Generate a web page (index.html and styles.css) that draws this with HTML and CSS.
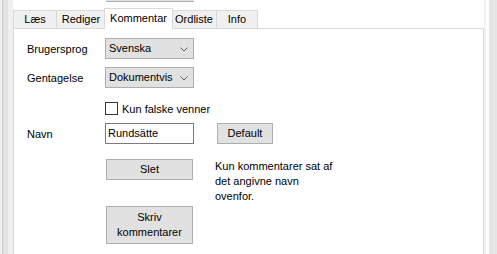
FILE: index.html
```html
<!DOCTYPE html>
<html lang="da">
<head>
  <meta charset="UTF-8">
  <title>Kommentar</title>
  <link rel="stylesheet" href="styles.css">
</head>
<body>
<div class="window">
  <div class="gutter"></div>
  <div class="main">
    <div class="topbar"><div class="cutoff"></div></div>
    <div class="tabs">
      <div class="tab tab-laes">Læs</div>
      <div class="tab tab-rediger">Rediger</div>
      <div class="tab tab-active">Kommentar</div>
      <div class="tab tab-ordliste">Ordliste</div>
      <div class="tab tab-info">Info</div>
    </div>
    <div class="panel">
      <div class="row">
        <span class="label">Brugersprog</span>
        <div class="combo">Svenska<svg class="chev" width="8" height="5" viewBox="0 0 8 5"><path d="M0.5 0.5 L4 4 L7.5 0.5" fill="none" stroke="#606060" stroke-width="1"/></svg></div>
      </div>
      <div class="row row-gap">
        <span class="label">Gentagelse</span>
        <div class="combo">Dokumentvis<svg class="chev" width="8" height="5" viewBox="0 0 8 5"><path d="M0.5 0.5 L4 4 L7.5 0.5" fill="none" stroke="#606060" stroke-width="1"/></svg></div>
      </div>
      <div class="row row-check">
        <span class="check"></span>
        <span class="check-text">Kun falske venner</span>
      </div>
      <div class="row row-gap">
        <span class="label">Navn</span>
        <div class="textbox">Rundsätte</div>
        <div class="btn btn-default">Default</div>
      </div>
      <div class="row row-top row-slet">
        <div class="btn btn-wide">Slet</div>
        <p class="note">Kun kommentarer sat af<br>det angivne navn<br>ovenfor.</p>
      </div>
      <div class="row row-write">
        <div class="btn btn-wide btn-tall">Skriv<br>kommentarer</div>
      </div>
    </div>
  </div>
  <div class="scroll"></div>
</div>
</body>
</html>
```

FILE: styles.css
```css
body { margin: 0; background: #fff; font-family: "Liberation Sans", Arial, sans-serif; font-size: 11px; color: #000; }
.window { display: flex; width: 497px; height: 254px; overflow: hidden; }
.gutter { width: 13px; flex: none; background: linear-gradient(to right, #f0f0f0 0 2px, #cdcdcd 2px 3px, #e3e3e3 3px 8px, #f0f0f0 8px 13px); }
.main { width: 471px; flex: none; display: flex; flex-direction: column; }
.scroll { flex: 1; background: linear-gradient(to right, #f0f0f0 0 2px, #fff 2px 5px, #e6e6e6 5px); }

.topbar { height: 8px; flex: none; }
.cutoff { margin-left: 93px; width: 88px; height: 1px; background: #e1e1e1; border-bottom: 1px solid #adadad; }

.tabs { display: flex; align-items: flex-end; height: 20px; flex: none; }
.tab { height: 17px; line-height: 17px; background: #f0f0f0; border: 1px solid #d9d9d9; border-bottom: none; text-align: center; box-sizing: border-box; height: 18px; margin-left: -1px; }
.tab-laes { width: 44px; margin-left: 0; }
.tab-rediger { width: 50px; }
.tab-active { position: relative; z-index: 1; width: 69px; height: 21px; line-height: 18px; margin: 0 -1px -1px -2px; background: #fff; }
.tab-ordliste { width: 46px; }
.tab-info { width: 42px; }

.panel { flex: none; height: 260px; border: 1px solid #d9d9d9; background: #fff; padding: 9px 0 0 13px; }

.row { display: flex; align-items: center; height: 21px; }
.row-gap { margin-top: 8px; }
.label { width: 78px; flex: none; }
.combo { position: relative; width: 89px; height: 21px; box-sizing: border-box; border: 1px solid #adadad; background: #e1e1e1; padding-left: 3px; line-height: 19px; }
.chev { position: absolute; right: 5px; top: 8px; }

.row-check { height: 13px; margin-top: 14px; }
.check { width: 13px; height: 13px; box-sizing: border-box; border: 1px solid #333; background: #fff; margin-left: 78px; }
.check-text { margin-left: 4px; }

.textbox { width: 89px; height: 21px; box-sizing: border-box; border: 1px solid #7a7a7a; background: #fff; padding-left: 2px; line-height: 19px; }
.btn { box-sizing: border-box; border: 1px solid #adadad; background: #e1e1e1; text-align: center; }
.btn-default { width: 56px; height: 21px; line-height: 19px; margin-left: 23px; }

.row-top { align-items: flex-start; height: auto; }
.row-slet { margin-top: 15px; }
.btn-wide { width: 87px; height: 21px; line-height: 19px; margin-left: 79px; flex: none; }
.note { margin: 0 0 0 22px; line-height: 15px; }
.row-write { height: auto; margin-top: 2px; }
.btn-tall { height: 38px; line-height: 15px; padding-top: 3px; }
```
